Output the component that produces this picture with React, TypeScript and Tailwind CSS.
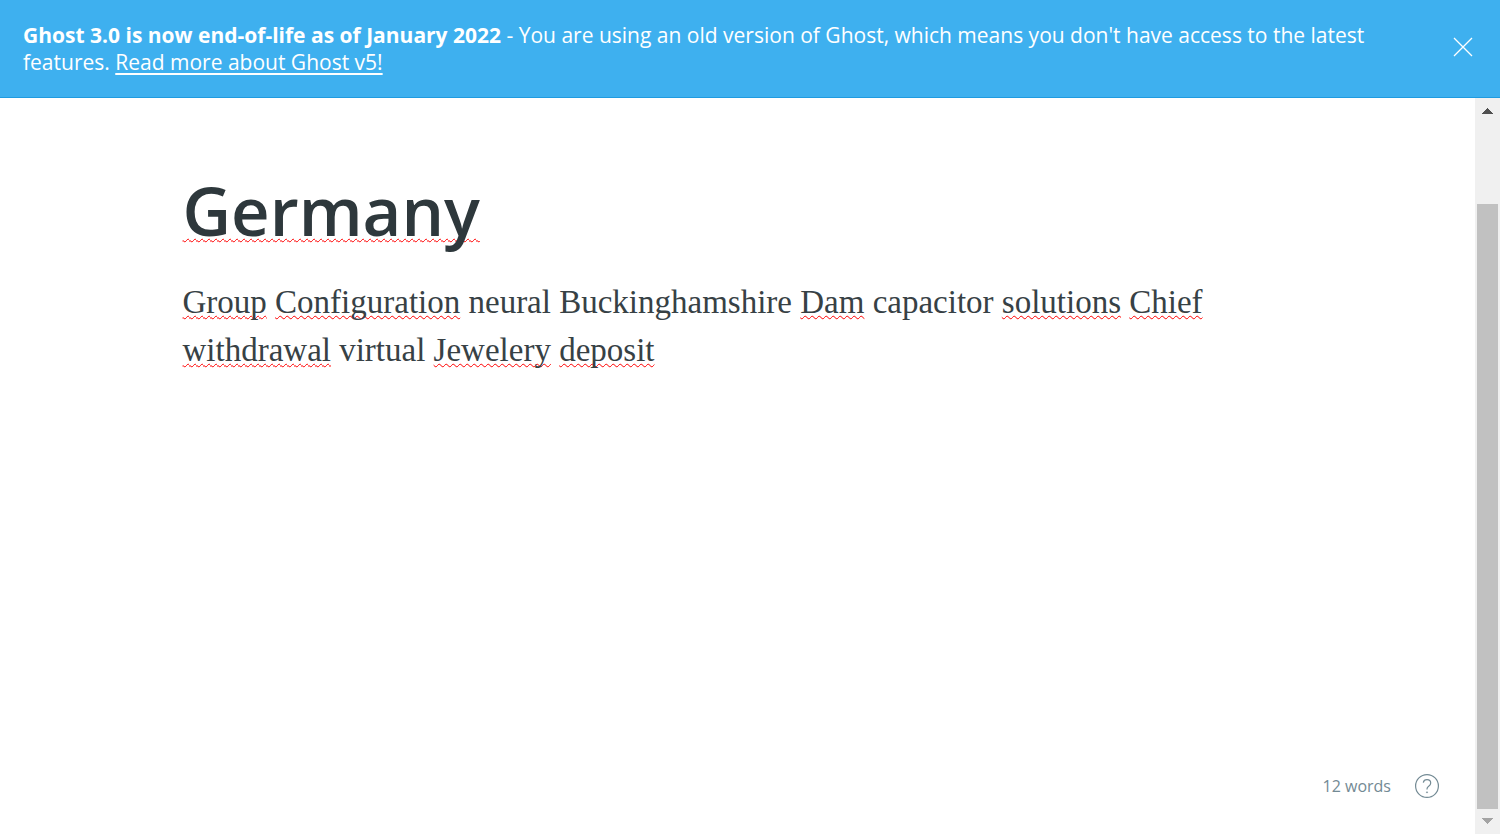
import type { ReactNode } from "react";

function Misspelled({ children }: { children: ReactNode }) {
  return (
    <span className="underline decoration-[#ff0000] decoration-wavy decoration-1 underline-offset-2 [text-decoration-skip-ink:none]">
      {children}
    </span>
  );
}

function Banner() {
  return (
    <aside className="flex items-start justify-between border-b border-[#1f9be0] bg-[#3eb0ef] pt-[22px] pr-[27px] pb-[21px] pl-[23px] font-['Open_Sans','Segoe_UI',sans-serif] text-[21px] leading-[27px] text-white">
      <p className="max-w-[1380px]">
        <strong className="font-bold">Ghost 3.0 is now end-of-life as of January 2022</strong> - You are using an old
        version of Ghost, which means you don't have access to the latest features.{" "}
        <a href="#ghost-v5" className="underline decoration-2 underline-offset-3">
          Read more about Ghost v5!
        </a>
      </p>
      <button type="button" aria-label="Close" className="mt-[15px] shrink-0">
        <svg viewBox="0 0 20 20" className="size-5" fill="none" stroke="currentColor" strokeWidth="1.3">
          <path d="M1 1l18 18M19 1L1 19" />
        </svg>
      </button>
    </aside>
  );
}

function Scrollbar() {
  return (
    <div aria-hidden="true" className="flex w-[25px] shrink-0 flex-col items-center bg-[#f0f0f0]">
      <svg viewBox="0 0 25 25" className="h-[25px] w-[25px]" shapeRendering="crispEdges">
        <path d="M7 16L12.500 10L18 16Z" fill="#505050" />
      </svg>
      <div className="mt-[81px] w-[21px] flex-1 bg-[#c1c1c1]" />
      <svg viewBox="0 0 25 25" className="h-[25px] w-[25px]" shapeRendering="crispEdges">
        <path d="M7 9L12.500 15L18 9Z" fill="#a3a3a3" />
      </svg>
    </div>
  );
}

export default function App() {
  return (
    <div className="flex h-screen flex-col bg-white">
      <Banner />
      <div className="flex min-h-0 flex-1">
        <main className="flex flex-1 flex-col">
          <article className="mx-auto w-full max-w-[1110px] flex-1 pt-[68px]">
            <h1
              contentEditable
              suppressContentEditableWarning
              spellCheck={false}
              className="font-['Open_Sans','Segoe_UI',sans-serif] text-[67px] leading-[88px] font-semibold text-[#2e383c] outline-none"
            >
              <Misspelled>Germany</Misspelled>
            </h1>
            <p
              contentEditable
              suppressContentEditableWarning
              spellCheck={false}
              className="mt-6 font-[Georgia,'Liberation_Serif',serif] text-[33px] leading-[48px] text-[#374145] outline-none"
            >
              <Misspelled>Group</Misspelled> <Misspelled>Configuration</Misspelled> neural Buckinghamshire{" "}
              <Misspelled>Dam</Misspelled> capacitor <Misspelled>solutions</Misspelled>{" "}
              <Misspelled>Chief</Misspelled> <Misspelled>withdrawal</Misspelled> virtual{" "}
              <Misspelled>Jewelery</Misspelled> <Misspelled>deposit</Misspelled>
            </p>
          </article>
          <footer className="flex items-center justify-end gap-6 pr-9 pb-9 font-['Open_Sans','Segoe_UI',sans-serif] text-base leading-6 text-[#738a94]">
            <span>12 words</span>
            <a href="#help" aria-label="Help">
              <svg viewBox="0 0 24 24" className="size-6" fill="none" stroke="currentColor" strokeWidth="1.2">
                <circle cx="12" cy="12" r="11.400" />
                <path d="M8.300 8.600c.3-1.700 1.800-2.900 3.700-2.900 2.100 0 3.700 1.400 3.700 3.300 0 1.600-.9 2.400-2 3.200-1.100.8-1.700 1.400-1.700 2.800v.5" />
                <circle cx="12" cy="18.300" r=".6" fill="currentColor" strokeWidth=".6" />
              </svg>
            </a>
          </footer>
        </main>
        <Scrollbar />
      </div>
    </div>
  );
}
